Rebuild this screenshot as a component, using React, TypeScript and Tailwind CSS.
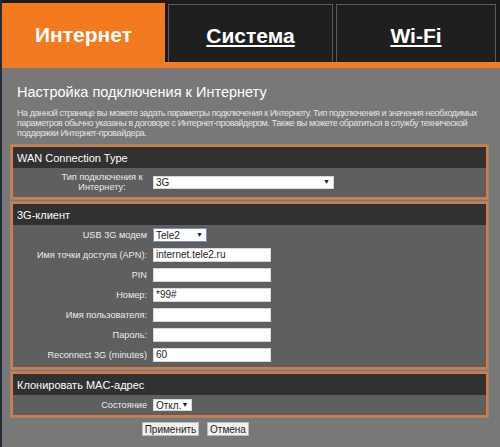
import React from "react";

function Section({ title, children, bodyClass }: { title: string; children: React.ReactNode; bodyClass: string }) {
  return (
    <div className="border-2 border-[#d07e49] shadow-[0_0_0_1px_rgba(214,140,100,0.45)]">
      <div className="h-[21px] bg-[#313131] flex items-center pl-[4px] text-[11px] text-white">{title}</div>
      <div className={"bg-[#5f5f5f] " + bodyClass}>{children}</div>
    </div>
  );
}

function Row({ label, children }: { label: React.ReactNode; children: React.ReactNode }) {
  return (
    <div className="grid grid-cols-[134px_1fr] gap-x-[6px] items-center">
      <div className="text-right text-[9.2px] leading-[10px] text-[#ececec]">{label}</div>
      <div className="flex items-center">{children}</div>
    </div>
  );
}

function Input({ value = "" }: { value?: string }) {
  return (
    <div className="w-[118px] h-[14px] bg-white border border-[#d8d8d8] text-[10px] leading-[12px] pl-[2px] text-[#222]">
      {value}
    </div>
  );
}

function Select({ value, w, h, border = "border-[#d8d8d8]" }: { value: string; w: string; h: string; border?: string }) {
  return (
    <div className={`${w} ${h} bg-white border ${border} flex items-center justify-between pl-[2px] pr-[3px] text-[10px] text-[#222]`}>
      <span>{value}</span>
      <span className="text-[7px]">▼</span>
    </div>
  );
}

export default function App() {
  return (
    <div className="w-[500px] h-[447px] bg-[#787878] border-l-2 border-[#242e38] font-['Liberation_Sans',Arial,sans-serif] overflow-hidden">
      <div className="bg-[#1b1b1b] pt-[3px] flex gap-[3px] pr-[4px]">
        <div className="w-[163px] h-[59px] bg-[#f47a20] flex items-center justify-center pt-[4px] text-[21px] font-bold text-white">
          Интернет
        </div>
        <div className="w-[165px] h-[58px] mt-px bg-[#1f1f1f] border border-[#5a5a5a] border-b-0 flex items-center justify-center pt-[4px] text-[21px] font-bold text-white underline">
          Система
        </div>
        <div className="flex-1 h-[58px] mt-px bg-[#1f1f1f] border border-[#5a5a5a] border-b-0 flex items-center justify-center pt-[4px] text-[21px] font-bold text-white underline">
          Wi-Fi
        </div>
      </div>
      <div className="h-[6px] bg-[#f47a20]" />

      <div className="pl-[9px] pr-[12px]">
        <div className="pl-[6px] pt-[16px] text-[14.5px] leading-[17px] text-white">Настройка подключения к Интернету</div>
        <div className="pl-[6px] mt-[8px] text-[9px] leading-[9.8px] tracking-[-0.43px] text-[#e4e4e4] whitespace-nowrap">
          На данной странице вы можете задать параметры подключения к Интернету. Тип подключения и значения необходимых
          <br />
          параметров обычно указаны в договоре с Интернет-провайдером. Также вы можете обратиться в службу технической
          <br />
          поддержки Интернет-провайдера.
        </div>

        <div className="mt-[7px] flex flex-col gap-[3px]">
          <Section title="WAN Connection Type" bodyClass="pt-[4px] pb-[5px]">
            <Row
              label={
                <div className="text-center w-[90px] ml-auto">
                  Тип подключения к
                  <br />
                  Интернету:
                </div>
              }
            >
              <Select value="3G" w="w-[181px]" h="h-[13px]" />
            </Row>
          </Section>

          <Section title="3G-клиент" bodyClass="pt-[3px] pb-[5px] flex flex-col gap-[6px]">
            <Row label="USB 3G модем">
              <Select value="Tele2" w="w-[54px]" h="h-[14px]" border="border-[#7d8fc4]" />
            </Row>
            <Row label="Имя точки доступа (APN):">
              <Input value="internet.tele2.ru" />
            </Row>
            <Row label="PIN">
              <Input />
            </Row>
            <Row label="Номер:">
              <Input value="*99#" />
            </Row>
            <Row label="Имя пользователя:">
              <Input />
            </Row>
            <Row label="Пароль:">
              <Input />
            </Row>
            <Row label="Reconnect 3G (minutes)">
              <Input value="60" />
            </Row>
          </Section>

          <Section title="Клонировать MAC-адрес" bodyClass="h-[20px] flex flex-col justify-center">
            <Row label="Состояние">
              <Select value="Откл." w="w-[39px]" h="h-[12px]" />
            </Row>
          </Section>
        </div>

        <div className="mt-[5px] pl-[131px] flex gap-[8px]">
          <div className="w-[57px] h-[14px] bg-[#f0f0f0] border border-[#bdbdbd] flex items-center justify-center text-[10px] text-[#222]">
            Применить
          </div>
          <div className="w-[42px] h-[14px] bg-[#f0f0f0] border border-[#bdbdbd] flex items-center justify-center text-[10px] text-[#222]">
            Отмена
          </div>
        </div>
      </div>
    </div>
  );
}
